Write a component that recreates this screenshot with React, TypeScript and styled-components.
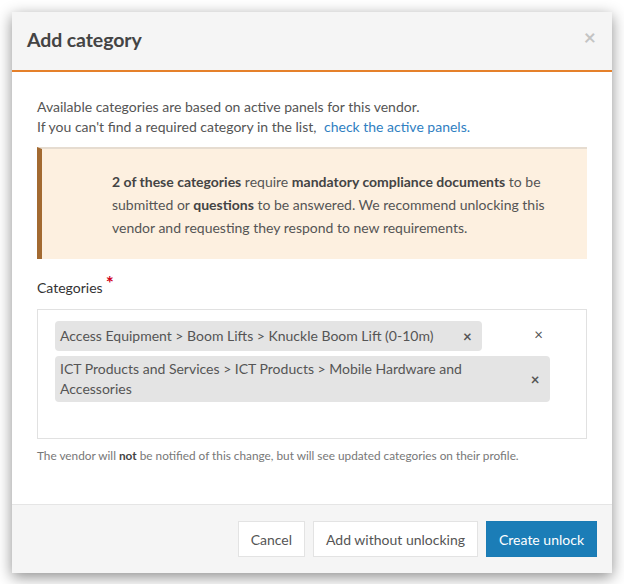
import React from "react";
import styled, { createGlobalStyle } from "styled-components";

const GlobalStyle = createGlobalStyle`
  html, body {
    margin: 0;
    padding: 0;
    background: #ffffff;
    font-family: Lato, "Open Sans", Arial, sans-serif;
    -webkit-font-smoothing: antialiased;
  }
  * { box-sizing: border-box; }
`;

const Page = styled.div`
  padding: 12px;
`;

const Modal = styled.div`
  width: 600px;
  background: #ffffff;
  box-shadow: 0 4px 14px rgba(0, 0, 0, 0.45);
  display: flex;
  flex-direction: column;
`;

const Header = styled.div`
  height: 60px;
  padding: 0 16px 2px 15px;
  background: #f5f5f5;
  border-bottom: 2px solid #e5802a;
  display: flex;
  align-items: center;
  justify-content: space-between;
`;

const Title = styled.h4`
  margin: 0;
  font-size: 19.5px;
  line-height: 24px;
  font-weight: 700;
  color: #444444;
  letter-spacing: -0.1px;
`;

const CloseButton = styled.span`
  font-size: 21px;
  line-height: 1;
  font-weight: 700;
  color: #000;
  opacity: 0.2;
  margin-top: -8px;
  cursor: pointer;
`;

const Body = styled.div`
  padding: 25px 25px 40px 25px;
  color: #555555;
  font-size: 14px;
  line-height: 20px;
`;

const Intro = styled.p`
  margin: 0;
`;

const Link = styled.a`
  color: #2f80c2;
  text-decoration: none;
  margin-left: 4px;
`;

const Alert = styled.div`
  margin-top: 10px;
  background: #fdf0e0;
  border-top: 2px solid #e6dcd0;
  border-left: 5px solid #a36a31;
  padding: 21px 40px 20px 70px;
  line-height: 23px;
  color: #555555;

  b {
    color: #444444;
    font-weight: 700;
  }
`;

const Label = styled.label`
  display: block;
  margin-top: 19px;
  color: #333333;
  font-size: 14px;
  line-height: 20px;
`;

const Required = styled.span`
  color: #d0021b;
  font-weight: 700;
  font-size: 19px;
  line-height: 0;
  position: relative;
  top: -3px;
  margin-left: 3px;
`;

const SelectBox = styled.div`
  position: relative;
  margin-top: 11px;
  border: 1px solid #e1e1e1;
  padding: 11px 36px 11px 17px;
  display: flex;
  flex-direction: column;
  align-items: flex-start;
`;

const TagList = styled.div`
  display: flex;
  flex-direction: column;
  align-items: flex-start;
  gap: 5px;
  width: 100%;
`;

const Tag = styled.div`
  display: flex;
  align-items: center;
  min-height: 30px;
  max-width: 100%;
  padding: 3px 0 3px 5px;
  background: #e4e4e4;
  border-radius: 4px;
  color: #555555;
  font-size: 14px;
  line-height: 20px;
`;

const TagText = styled.span`
  flex: 1 1 auto;
`;

const TagRemove = styled.span`
  flex: 0 0 30px;
  margin-left: 19px;
  text-align: center;
  font-size: 15px;
  font-weight: 700;
  color: #555555;
  cursor: pointer;
`;

const ClearAll = styled.span`
  position: absolute;
  top: 14px;
  right: 43px;
  font-size: 15px;
  color: #555555;
  cursor: pointer;
`;

const SearchInput = styled.input`
  margin-top: 5px;
  height: 20px;
  border: none;
  outline: none;
  background: transparent;
  font-family: inherit;
  font-size: 14px;
  padding: 0;
`;

const Help = styled.p`
  margin: 9px 0 0;
  font-size: 11.8px;
  line-height: 16px;
  color: #777777;

  b {
    color: #444444;
    font-weight: 700;
  }
`;

const Footer = styled.div`
  background: #f5f5f5;
  border-top: 1px solid #e5e5e5;
  padding: 16px 15px 16px;
  display: flex;
  justify-content: flex-end;
  gap: 8px;
`;

const Button = styled.button<{ $primary?: boolean }>`
  height: 36px;
  padding: 0 12px;
  font-family: inherit;
  font-size: 14px;
  border: 1px solid ${(p) => (p.$primary ? "#1a7bb4" : "#e3e3e3")};
  background: ${(p) => (p.$primary ? "#1b7db7" : "#ffffff")};
  color: ${(p) => (p.$primary ? "#ffffff" : "#555555")};
  border-radius: 0;
  cursor: pointer;
`;

const categories = [
  "Access Equipment > Boom Lifts > Knuckle Boom Lift (0-10m)",
  "ICT Products and Services > ICT Products > Mobile Hardware and Accessories",
];

export default function App() {
  return (
    <>
      <GlobalStyle />
      <Page>
        <Modal>
          <Header>
            <Title>Add category</Title>
            <CloseButton>×</CloseButton>
          </Header>
          <Body>
            <Intro>
              Available categories are based on active panels for this vendor.
              <br />
              If you can't find a required category in the list,{" "}
              <Link href="#">check the active panels.</Link>
            </Intro>
            <Alert>
              <b>2 of these categories</b> require{" "}
              <b>mandatory compliance documents</b> to be submitted or{" "}
              <b>questions</b> to be answered. We recommend unlocking this
              vendor and requesting they respond to new requirements.
            </Alert>
            <Label>
              Categories<Required>*</Required>
            </Label>
            <SelectBox>
              <TagList>
                {categories.map((c) => (
                  <Tag key={c}>
                    <TagText>{c}</TagText>
                    <TagRemove>×</TagRemove>
                  </Tag>
                ))}
              </TagList>
              <SearchInput aria-label="Search categories" />
              <ClearAll>×</ClearAll>
            </SelectBox>
            <Help>
              The vendor will <b>not</b> be notified of this change, but will
              see updated categories on their profile.
            </Help>
          </Body>
          <Footer>
            <Button>Cancel</Button>
            <Button>Add without unlocking</Button>
            <Button $primary>Create unlock</Button>
          </Footer>
        </Modal>
      </Page>
    </>
  );
}
